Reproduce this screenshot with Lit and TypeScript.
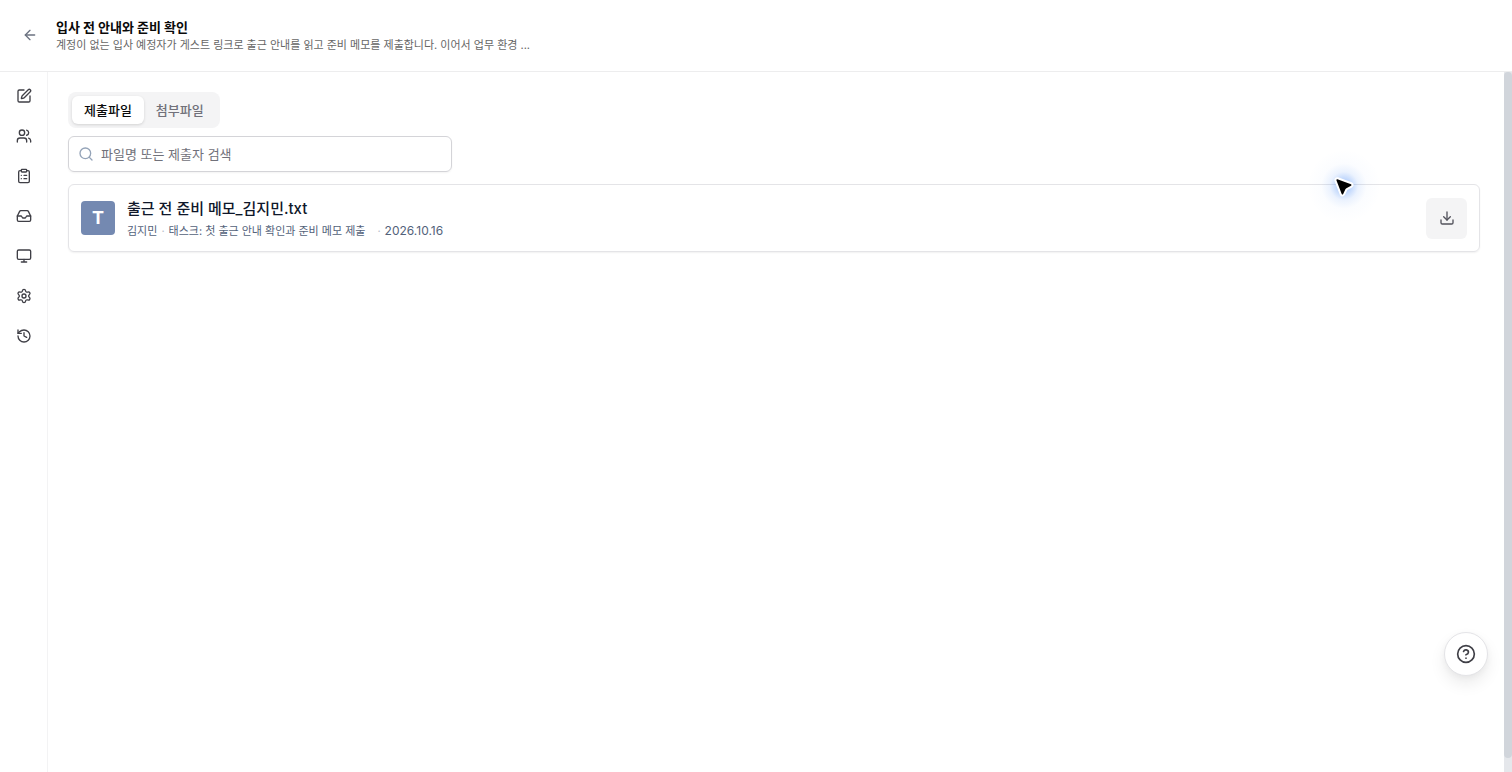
import { LitElement, html, css, svg } from "lit";
import { customElement, state } from "lit/decorators.js";

const icons = {
  back: svg`<path d="m12 19-7-7 7-7"/><path d="M19 12H5"/>`,
  edit: svg`<path d="M12 3H5a2 2 0 0 0-2 2v14a2 2 0 0 0 2 2h14a2 2 0 0 0 2-2v-7"/><path d="M18.375 2.625a1 1 0 0 1 3 3l-9.013 9.014a2 2 0 0 1-.853.505l-2.873.84a.5.5 0 0 1-.62-.62l.84-2.873a2 2 0 0 1 .506-.852z"/>`,
  users: svg`<path d="M16 21v-2a4 4 0 0 0-4-4H6a4 4 0 0 0-4 4v2"/><circle cx="9" cy="7" r="4"/><path d="M22 21v-2a4 4 0 0 0-3-3.87"/><path d="M16 3.13a4 4 0 0 1 0 7.75"/>`,
  clipboard: svg`<rect x="8" y="2" width="8" height="4" rx="1"/><path d="M16 4h2a2 2 0 0 1 2 2v14a2 2 0 0 1-2 2H6a2 2 0 0 1-2-2V6a2 2 0 0 1 2-2h2"/><path d="M12 11h4M12 16h4M8 11h.01M8 16h.01"/>`,
  inbox: svg`<path d="M22 12h-6l-2 3h-4l-2-3H2"/><path d="M5.45 5.11 2 12v6a2 2 0 0 0 2 2h16a2 2 0 0 0 2-2v-6l-3.45-6.89A2 2 0 0 0 16.76 4H7.24a2 2 0 0 0-1.79 1.11z"/>`,
  monitor: svg`<rect x="2" y="3" width="20" height="14" rx="2"/><path d="M8 21h8M12 17v4"/>`,
  settings: svg`<path d="M9.671 4.136a2.34 2.34 0 0 1 4.659 0 2.34 2.34 0 0 0 3.319 1.915 2.34 2.34 0 0 1 2.33 4.033 2.34 2.34 0 0 0 0 3.831 2.34 2.34 0 0 1-2.33 4.033 2.34 2.34 0 0 0-3.319 1.915 2.34 2.34 0 0 1-4.659 0 2.34 2.34 0 0 0-3.32-1.915 2.34 2.34 0 0 1-2.33-4.033 2.34 2.34 0 0 0 0-3.831A2.34 2.34 0 0 1 6.35 6.051a2.34 2.34 0 0 0 3.319-1.915"/><circle cx="12" cy="12" r="3"/>`,
  history: svg`<path d="M3 12a9 9 0 1 0 9-9 9.75 9.75 0 0 0-6.74 2.74L3 8"/><path d="M3 3v5h5"/><path d="M12 7v5l4 2"/>`,
  search: svg`<circle cx="11" cy="11" r="8"/><path d="m21 21-4.3-4.3"/>`,
  download: svg`<path d="M12 15V3"/><path d="M21 15v4a2 2 0 0 1-2 2H5a2 2 0 0 1-2-2v-4"/><path d="m7 10 5 5 5-5"/>`,
  help: svg`<circle cx="12" cy="12" r="10"/><path d="M9.09 9a3 3 0 0 1 5.83 1c0 2-3 3-3 3"/><path d="M12 17h.01"/>`,
};

type IconName = keyof typeof icons;

const icon = (name: IconName) =>
  html`<svg class="icon" viewBox="0 0 24 24" aria-hidden="true">${icons[name]}</svg>`;

const navItems: { icon: IconName; label: string }[] = [
  { icon: "edit", label: "편집" },
  { icon: "users", label: "참여자" },
  { icon: "clipboard", label: "태스크" },
  { icon: "inbox", label: "파일함" },
  { icon: "monitor", label: "화면" },
  { icon: "settings", label: "설정" },
  { icon: "history", label: "기록" },
];

const tabs = ["제출파일", "첨부파일"];

@customElement("app-root")
export class AppRoot extends LitElement {
  @state() private activeTab = 0;

  static styles = css`
    :host {
      display: flex;
      flex-direction: column;
      position: relative;
      height: 100vh;
      overflow: hidden;
      background: #fff;
      color: #0a0a0a;
      font-family: Inter, "Noto Sans CJK KR", sans-serif;
      font-size: 13px;
      line-height: 20px;
    }
    * {
      box-sizing: border-box;
    }
    button,
    input {
      font: inherit;
      color: inherit;
      margin: 0;
      padding: 0;
      border: 0;
      background: none;
    }
    button {
      display: flex;
      align-items: center;
      justify-content: center;
      cursor: pointer;
    }
    h1,
    h2,
    p {
      margin: 0;
    }
    .icon {
      display: block;
      flex: none;
      width: 16px;
      height: 16px;
      fill: none;
      stroke: currentColor;
      stroke-width: 2;
      stroke-linecap: round;
      stroke-linejoin: round;
    }
    .header {
      display: flex;
      align-items: center;
      gap: 8px;
      flex: none;
      height: 72px;
      padding: 0 12px 2px;
      border-bottom: 1px solid #ededee;
    }
    .back {
      width: 36px;
      height: 36px;
      color: #6b7280;
    }
    .heading {
      min-width: 0;
    }
    .title {
      font-size: 13px;
      line-height: 20px;
      font-weight: 700;
    }
    .subtitle {
      font-size: 11px;
      line-height: 16px;
      color: #666;
      white-space: nowrap;
      overflow: hidden;
      text-overflow: ellipsis;
    }
    .body {
      display: flex;
      flex: 1;
      min-height: 0;
    }
    .nav {
      display: flex;
      flex-direction: column;
      align-items: center;
      gap: 8px;
      flex: none;
      width: 48px;
      padding-top: 8px;
      border-right: 1px solid #f3f3f4;
      color: #3f3f46;
    }
    .nav-button {
      width: 32px;
      height: 32px;
    }
    .main {
      flex: 1;
      min-width: 0;
      padding: 20px 24px 20px 20px;
    }
    .tabs {
      display: flex;
      width: fit-content;
      padding: 4px;
      border-radius: 8px;
      background: #f4f4f5;
    }
    .tab {
      height: 28px;
      padding: 0 12px;
      border-radius: 6px;
      font-weight: 500;
      color: #71717a;
    }
    .tab[aria-selected="true"] {
      background: #fff;
      color: #0a0a0a;
      box-shadow: 0 1px 3px rgb(0 0 0 / 14%);
    }
    .search {
      display: flex;
      align-items: center;
      gap: 7px;
      width: 100%;
      max-width: 384px;
      height: 36px;
      margin-top: 8px;
      padding: 0 9px;
      border: 1px solid #d4d4d8;
      border-radius: 6px;
      box-shadow: 0 1px 2px rgb(0 0 0 / 5%);
      color: #94a3b8;
    }
    .search-input {
      flex: 1;
      min-width: 0;
      height: 100%;
      outline: none;
      color: #0a0a0a;
    }
    .search-input::placeholder {
      color: #71717a;
      opacity: 1;
    }
    .card {
      display: flex;
      align-items: center;
      gap: 12px;
      height: 68px;
      margin-top: 12px;
      padding: 0 12px;
      border: 1px solid #e4e4e7;
      border-radius: 6px;
      box-shadow: 0 1px 2px rgb(0 0 0 / 6%);
    }
    .badge {
      display: flex;
      align-items: center;
      justify-content: center;
      flex: none;
      width: 34px;
      height: 34px;
      border-radius: 4px;
      background: #7489b1;
      color: #fff;
      font-size: 18px;
      font-weight: 700;
    }
    .file {
      flex: 1;
      min-width: 0;
      padding-top: 2px;
    }
    .file-name {
      font-size: 15px;
      line-height: 24px;
      font-weight: 500;
      color: #0f172a;
    }
    .meta {
      display: flex;
      gap: 4px;
      font-size: 11px;
      line-height: 20px;
      color: #53627a;
      white-space: nowrap;
    }
    .dot {
      color: #b6bec9;
    }
    .task {
      margin-right: 8px;
    }
    .date {
      font-size: 12px;
    }
    .download {
      flex: none;
      width: 41px;
      height: 41px;
      border-radius: 6px;
      background: #f4f4f5;
      color: #52525b;
    }
    .track {
      flex: none;
      width: 8px;
      background: #e5e7eb;
    }
    .thumb {
      height: 98%;
      border-radius: 4px;
      background: #d1d5db;
    }
    .help {
      position: absolute;
      right: 24px;
      bottom: 96px;
      width: 44px;
      height: 44px;
      border: 1px solid #e4e4e7;
      border-radius: 50%;
      background: #fff;
      color: #3f3f46;
      box-shadow: 0 8px 16px rgb(0 0 0 / 8%), 0 2px 6px rgb(0 0 0 / 4%);
    }
    .help .icon {
      width: 20px;
      height: 20px;
    }
    .pointer {
      position: absolute;
      top: 146px;
      right: 128px;
      width: 80px;
      height: 80px;
      pointer-events: none;
      background: radial-gradient(
        circle,
        rgb(59 130 246 / 50%) 0,
        rgb(59 130 246 / 32%) 12%,
        rgb(59 130 246 / 10%) 25%,
        rgb(59 130 246 / 2%) 40%,
        transparent 65%
      );
    }
    .pointer-shape {
      display: block;
      width: 80px;
      height: 80px;
      fill: #000;
      stroke: #fff;
      stroke-width: 4;
      stroke-linejoin: round;
      paint-order: stroke;
    }
  `;

  render() {
    return html`
      <header class="header">
        <button class="back" aria-label="뒤로">${icon("back")}</button>
        <div class="heading">
          <h1 class="title">입사 전 안내와 준비 확인</h1>
          <p class="subtitle">계정이 없는 입사 예정자가 게스트 링크로 출근 안내를 읽고 준비 메모를 제출합니다. 이어서 업무 환경 ...</p>
        </div>
      </header>
      <div class="body">
        <nav class="nav">
          ${navItems.map(
            (item) => html`<button class="nav-button" aria-label=${item.label}>${icon(item.icon)}</button>`
          )}
        </nav>
        <main class="main">
          <div class="tabs" role="tablist">
            ${tabs.map(
              (label, i) => html`<button
                class="tab"
                role="tab"
                aria-selected=${this.activeTab === i ? "true" : "false"}
                @click=${() => (this.activeTab = i)}
              >${label}</button>`
            )}
          </div>
          <label class="search">
            ${icon("search")}
            <input class="search-input" type="text" aria-label="파일 검색" placeholder="파일명 또는 제출자 검색" />
          </label>
          <article class="card">
            <span class="badge">T</span>
            <div class="file">
              <h2 class="file-name">출근 전 준비 메모_김지민.txt</h2>
              <p class="meta">
                <span>김지민</span><span class="dot">·</span>
                <span class="task">태스크: 첫 출근 안내 확인과 준비 메모 제출</span>
                <span class="dot">·</span><span class="date">2026.10.16</span>
              </p>
            </div>
            <button class="download" aria-label="다운로드">${icon("download")}</button>
          </article>
        </main>
        <div class="track"><div class="thumb"></div></div>
      </div>
      <button class="help" aria-label="도움말">${icon("help")}</button>
      <div class="pointer">
        <svg class="pointer-shape" viewBox="0 0 80 80" aria-hidden="true">
          <path d="M33.4 33.2 47 38.2Q48.2 38.9 47 39.7L42.4 42.2Q41.8 42.5 41.5 43.1L39.2 48Q38.4 49.2 37.7 48L32.4 34.3Q32.3 33 33.4 33.2Z" />
        </svg>
      </div>
    `;
  }
}
